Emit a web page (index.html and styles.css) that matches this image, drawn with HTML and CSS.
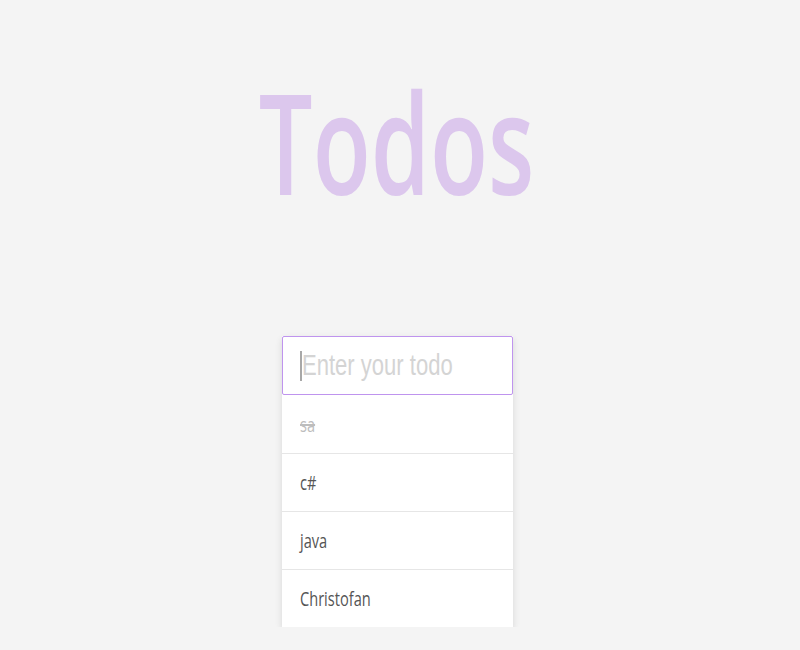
FILE: index.html
```html
<!DOCTYPE html>
<html>
<head>
<meta charset="utf-8">
<link rel="stylesheet" href="styles.css">
</head>
<body>
<div class="page">
  <h1 class="title"><span class="title-text">Todos</span></h1>
  <div class="todo-box">
    <div class="input-wrap">
      <input class="todo-input" type="text" aria-label="Enter your todo">
      <span class="placeholder">Enter your todo</span>
      <span class="caret"></span>
    </div>
    <ul class="todo-list">
      <li class="todo-item done"><span class="item-text">sa</span></li>
      <li class="todo-item"><span class="item-text">c#</span></li>
      <li class="todo-item"><span class="item-text">java</span></li>
      <li class="todo-item"><span class="item-text">Christofan</span></li>
    </ul>
  </div>
</div>
</body>
</html>
```

FILE: styles.css
```css
html, body {
  margin: 0;
  padding: 0;
  background: #f4f4f4;
}
.page {
  display: flex;
  flex-direction: column;
  align-items: center;
  padding-top: 71px;
  padding-right: 6px;
}
.title {
  margin: 0;
  font-family: "Open Sans", sans-serif;
  font-weight: 600;
  font-size: 140px;
  line-height: 140px;
  color: #dcc7ed;
  height: 140px;
}
.title-text {
  display: inline-block;
  transform: scaleX(0.68);
}
.todo-box {
  margin-top: 125px;
  width: 231px;
  box-shadow: 0 3px 7px rgba(0, 0, 0, 0.12);
  background: #fff;
}
.input-wrap {
  position: relative;
}
.todo-input {
  display: block;
  box-sizing: border-box;
  width: 100%;
  height: 59px;
  margin: 0;
  border: 1px solid #bf94ee;
  border-radius: 2px;
  padding: 0 0 0 18px;
  font-family: "Liberation Sans", Arial, sans-serif;
  font-size: 29px;
  color: #333;
  background: #fff;
  outline: none;
}
.placeholder {
  position: absolute;
  left: 20px;
  top: 0;
  height: 59px;
  line-height: 59px;
  font-family: "Liberation Sans", Arial, sans-serif;
  font-size: 29px;
  color: #d4d4d4;
  transform-origin: left center;
  transform: scaleX(0.76);
  pointer-events: none;
  white-space: nowrap;
}
.caret {
  position: absolute;
  left: 18px;
  top: 15px;
  width: 2px;
  height: 30px;
  background: #a8a8a8;
}
.todo-list {
  list-style: none;
  margin: 0;
  padding: 0;
}
.todo-item {
  height: 57px;
  display: flex;
  align-items: center;
  padding-left: 18px;
  border-top: 1px solid #e6e6e6;
  font-family: "Open Sans", sans-serif;
  font-size: 20px;
  color: #555;
}
.todo-item:first-child {
  border-top: none;
  height: 58px;
}
.item-text {
  display: inline-block;
  transform-origin: left center;
  transform: scaleX(0.73);
}
.done .item-text {
  color: #bdbdbd;
  text-decoration: line-through;
}
```
